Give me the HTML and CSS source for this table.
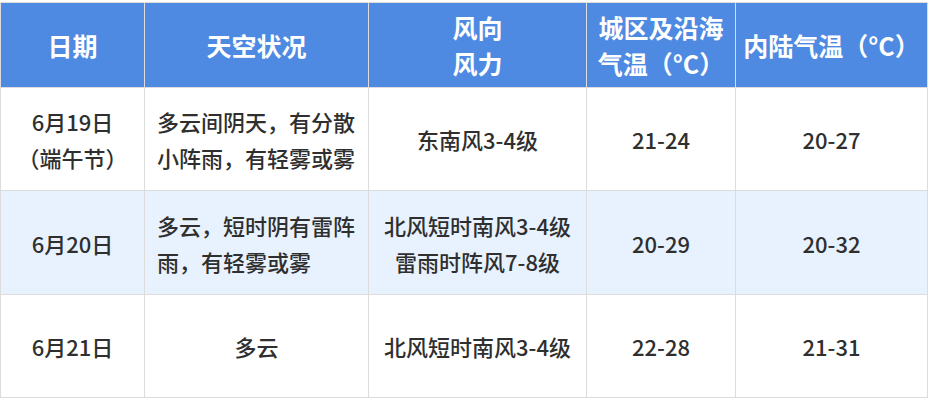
FILE: index.html
```html
<!DOCTYPE html>
<html lang="zh">
<head>
<meta charset="utf-8">
<link rel="stylesheet" href="styles.css">
</head>
<body>
<table class="weather">
  <colgroup>
    <col class="c1"><col class="c2"><col class="c3"><col class="c4"><col class="c5">
  </colgroup>
  <thead>
    <tr class="head">
      <th>日期</th>
      <th>天空状况</th>
      <th>风向<br>风力</th>
      <th>城区及沿海<br>气温（°C）</th>
      <th>内陆气温（°C）</th>
    </tr>
  </thead>
  <tbody>
    <tr class="r1">
      <td>6月19日<br>（端午节）</td>
      <td class="left">多云间阴天，有分散<br>小阵雨，有轻雾或雾</td>
      <td>东南风3-4级</td>
      <td>21-24</td>
      <td>20-27</td>
    </tr>
    <tr class="r2 alt">
      <td>6月20日</td>
      <td class="left">多云，短时阴有雷阵<br>雨，有轻雾或雾</td>
      <td>北风短时南风3-4级<br>雷雨时阵风7-8级</td>
      <td>20-29</td>
      <td>20-32</td>
    </tr>
    <tr class="r3">
      <td>6月21日</td>
      <td>多云</td>
      <td>北风短时南风3-4级</td>
      <td>22-28</td>
      <td>21-31</td>
    </tr>
  </tbody>
</table>
</body>
</html>
```

FILE: styles.css
```css
html, body {
  margin: 0;
  padding: 0;
  background: #ffffff;
}
body {
  padding: 2px 0 0 0;
  font-family: "Noto Sans CJK SC", "Noto Sans", sans-serif;
}
.weather {
  border-collapse: collapse;
  table-layout: fixed;
  width: 927px;
  border: 1px solid #dcdcdc;
}
.c1 { width: 144px; }
.c2 { width: 224px; }
.c3 { width: 218px; }
.c4 { width: 149px; }
.c5 { width: 192px; }
.weather th,
.weather td {
  border: 1px solid #dcdcdc;
  padding: 0;
  text-align: center;
  vertical-align: middle;
}
.weather th {
  background: #4e8ae2;
  color: #ffffff;
  font-size: 25px;
  font-weight: 700;
  line-height: 36px;
}
.weather td {
  color: #2f2f2f;
  font-size: 22px;
  font-weight: 500;
  line-height: 36px;
}
.weather td.left {
  text-align: left;
  padding-left: 12px;
}
.head { height: 85px; }
.r1 { height: 103px; }
.r2 { height: 104px; }
.r3 { height: 103px; }
.alt td { background: #e8f2fe; }
```
